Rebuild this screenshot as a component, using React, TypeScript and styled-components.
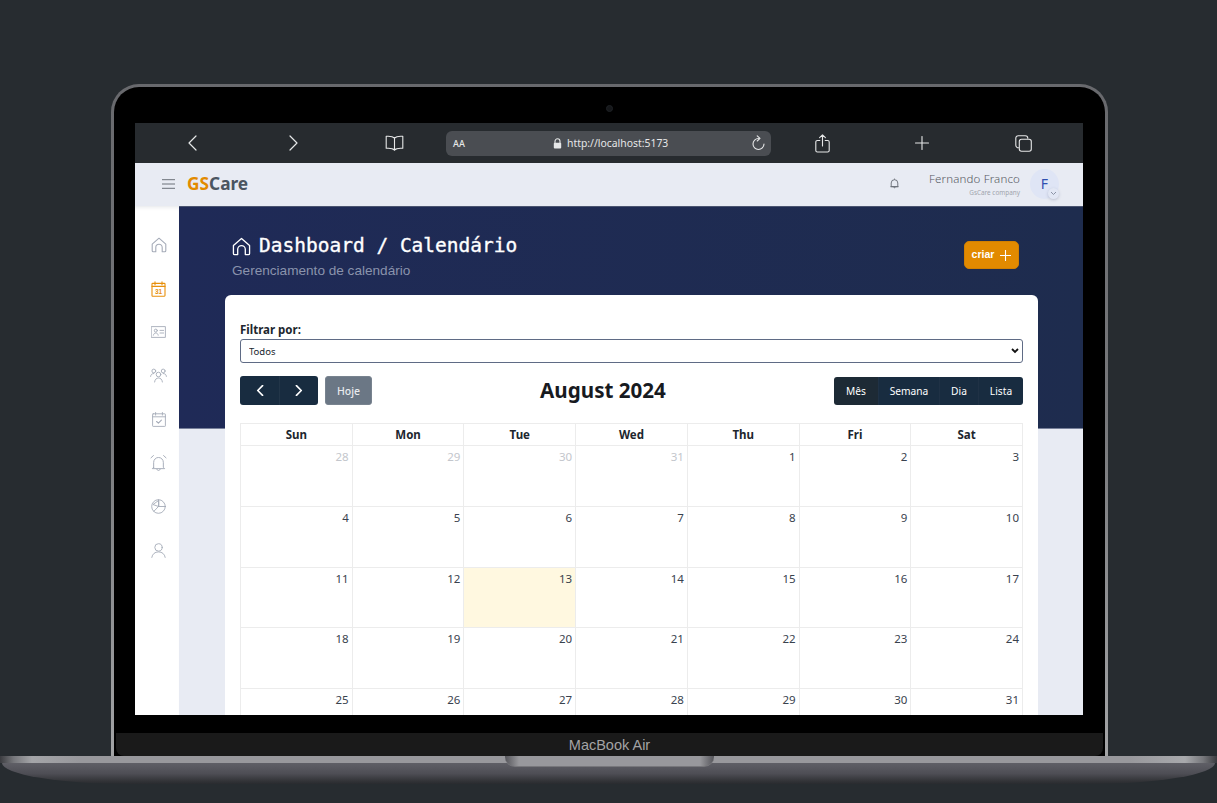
import React from 'react';
import styled, { createGlobalStyle } from 'styled-components';

const GlobalStyles = createGlobalStyle`
    html, body {
        margin: 0;
        padding: 0;
        background: #272c30;
    }
    * {
        box-sizing: border-box;
    }
`;

const UI_FONT = `"Noto Sans", "Open Sans", sans-serif`;

const Page = styled.div`
    width: 1217px;
    height: 803px;
    overflow: hidden;
    padding-top: 84px;
    background: #272c30;
    font-family: ${UI_FONT};
`;

const Lid = styled.div`
    width: 997px;
    height: 672px;
    margin-left: 111px;
    padding: 3px 3px 0;
    border-radius: 28px 28px 0 0;
    background: linear-gradient(180deg, #68696d 0%, #77787b 50%, #a3a4a6 100%);
`;
const LidInner = styled.div`
    height: 100%;
    display: flex;
    flex-direction: column;
    border-radius: 25px 25px 0 0;
    background: #000;
`;
const TopBezel = styled.div`
    height: 36px;
    flex: none;
    display: flex;
    align-items: center;
    justify-content: center;
    padding-top: 6px;
`;
const Camera = styled.div`
    width: 7px;
    height: 7px;
    border-radius: 50%;
    background: #15171a;
    border: 1px solid #1f2226;
`;
const Screen = styled.div`
    width: 948px;
    height: 592px;
    flex: none;
    margin-left: 21px;
    overflow: hidden;
    display: flex;
    flex-direction: column;
    background: #fff;
`;
const Chin = styled.div`
    height: 23px;
    flex: none;
    margin: 18px 2px 0;
    border-radius: 0 0 8px 8px;
    background: #1a1a1a;
    color: #a3a3a5;
    font-family: "Liberation Sans", Arial, sans-serif;
    font-size: 14.5px;
    line-height: 24px;
    text-align: center;
`;

const Base = styled.div`
    position: relative;
    height: 28px;
    width: 1217px;
`;
const BaseStrip = styled.div`
    height: 7px;
    background: linear-gradient(90deg, #3a3b3f 0, #77787c 14px, #a4a5a8 32px, #98989c 80px, #98989c 1130px, #a8a9ac 1185px, #77787c 1203px, #3a3b3f 1217px);
`;
const BaseBody = styled.div`
    height: 21px;
    margin: 0 2px;
    border-radius: 0 0 130px 130px / 0 0 21px 21px;
    background: linear-gradient(180deg, #5f5f66 0%, #4e4e55 50%, #333438 85%, #292b2f 100%);
`;
const BaseNotch = styled.div`
    position: absolute;
    top: 0;
    left: 505px;
    width: 209px;
    height: 11px;
    border-radius: 0 0 10px 10px;
    background: linear-gradient(90deg, #55555a 0, #98989c 14px, #98989c 195px, #55555a 100%);
    border-bottom: 1px solid #77777b;
`;

/* browser bar */
const BrowserBar = styled.div`
    height: 40px;
    flex: none;
    display: flex;
    align-items: center;
    padding-left: 8px;
    background: #272b2f;
    color: #e6e7e8;
`;
const BrowserIcon = styled.div<{ $wide?: boolean }>`
    width: ${(p) => (p.$wide ? 102 : 100)}px;
    display: flex;
    justify-content: center;
    align-items: center;
`;
const UrlBar = styled.div`
    width: 325px;
    height: 25px;
    margin: 0 1px;
    padding: 0 6px 0 7px;
    display: flex;
    align-items: center;
    border-radius: 6px;
    background: #4a4d52;
`;
const UrlAa = styled.span`
    width: 100px;
    font-size: 9px;
    font-weight: 500;
`;
const UrlText = styled.span`
    margin-left: 5px;
    font-size: 10.4px;
    flex: 1;
`;

/* app header */
const AppHeader = styled.div`
    height: 43px;
    flex: none;
    display: flex;
    align-items: center;
    padding: 0 24px 2px 27px;
    background: #e8ebf3;
`;
const Logo = styled.div`
    margin-left: 12px;
    font-size: 17.3px;
    font-weight: 700;
    color: #4b5560;
`;
const LogoAccent = styled.span`
    color: #e28a00;
`;
const HeaderRight = styled.div`
    margin-left: auto;
    display: flex;
    align-items: center;
`;
const UserBlock = styled.div`
    margin: 1px 10px 0 30px;
    display: flex;
    flex-direction: column;
    align-items: flex-end;
`;
const UserName = styled.div`
    font-size: 11.5px;
    line-height: 15px;
    letter-spacing: 0.15px;
    font-weight: 300;
    color: #55585f;
`;
const UserCompany = styled.div`
    margin-top: 1px;
    font-size: 6.4px;
    line-height: 11px;
    color: #a0a4ad;
`;
const Avatar = styled.div`
    position: relative;
    width: 29px;
    height: 30px;
    display: flex;
    align-items: center;
    justify-content: center;
    border-radius: 50%;
    background: #dfe5f5;
    color: #2f4fb0;
    font-size: 14px;
`;
const AvatarBadge = styled.div`
    position: absolute;
    right: 0;
    bottom: 0;
    width: 11px;
    height: 11px;
    display: flex;
    align-items: center;
    justify-content: center;
    border-radius: 50%;
    background: #e2e7f4;
    box-shadow: 0 1px 3px rgba(90, 100, 130, 0.3);
    color: #8b93a5;
`;

/* body */
const AppBody = styled.div`
    flex: 1;
    min-height: 0;
    display: flex;
`;
const Sidebar = styled.div`
    width: 44px;
    flex: none;
    padding-top: 17px;
    background: #fff;
    box-shadow: inset 0 4px 4px -3px rgba(60, 70, 90, 0.14);
    display: grid;
    grid-auto-rows: 43.7px;
    align-content: start;
`;
const SideItem = styled.div<{ $active?: boolean }>`
    display: flex;
    align-items: center;
    justify-content: center;
    padding-left: 3px;
    color: ${(p) => (p.$active ? '#e8900c' : '#a5abb8')};
`;
const Main = styled.div`
    flex: 1;
    min-width: 0;
    background: #e8ebf3;
`;
const Hero = styled.div`
    height: 223px;
    display: flex;
    justify-content: space-between;
    align-items: flex-start;
    padding: 27px 64px 0 53px;
    background: linear-gradient(90deg, #1f2a57 0%, #1e2c4e 100%);
    border-top: 1px solid #4a5470;
    border-bottom: 1px solid #77809a;
`;
const HeroTitleRow = styled.div`
    display: flex;
    align-items: center;
    gap: 8px;
    color: #fff;
`;
const HeroTitle = styled.h1`
    margin: 0;
    font-family: "DejaVu Sans Mono", "Liberation Mono", monospace;
    font-size: 19.5px;
    line-height: 24px;
    font-weight: 500;
    -webkit-text-stroke: 0.35px #fff;
    color: #fff;
`;
const HeroSubtitle = styled.div`
    margin-top: 4px;
    font-family: "Liberation Sans", Arial, sans-serif;
    font-size: 13.6px;
    line-height: 18px;
    color: #8a93ac;
`;
const CreateButton = styled.button`
    margin-top: 7px;
    width: 55px;
    height: 28px;
    display: flex;
    align-items: center;
    justify-content: center;
    gap: 6px;
    padding: 0;
    border: 1px solid #d28000;
    border-radius: 5px;
    background: #e28a00;
    color: #fff;
    font-family: "Liberation Sans", Arial, sans-serif;
    font-size: 10.5px;
    font-weight: 700;
`;
const CreateLabel = styled.span`
    margin-bottom: 3px;
`;

/* card */
const Card = styled.div`
    margin: -134px 45px 0 46px;
    padding: 26px 15px 0;
    position: relative;
    border-radius: 6px 6px 0 0;
    background: #fff;
`;
const FilterLabel = styled.label`
    display: block;
    font-size: 11.5px;
    line-height: 18px;
    font-weight: 700;
    color: #20262e;
`;
const SelectWrap = styled.div`
    position: relative;
    color: #111;
`;
const FilterSelect = styled.select`
    display: block;
    width: 100%;
    height: 24px;
    padding: 0 8px;
    appearance: none;
    border: 1px solid #5f6b85;
    border-radius: 3px;
    background: #fff;
    color: #20262e;
    font-family: ${UI_FONT};
    font-size: 9.5px;
`;
const SelectArrow = styled.svg`
    position: absolute;
    top: 9px;
    right: 4px;
    pointer-events: none;
`;
const Toolbar = styled.div`
    margin-top: 13px;
    height: 29px;
    display: flex;
    justify-content: space-between;
    align-items: center;
`;
const ToolbarGroup = styled.div`
    display: flex;
    align-items: center;
    gap: 7px;
`;
const ButtonGroup = styled.div`
    display: flex;
    border-radius: 3px;
    overflow: hidden;
`;
const NavButton = styled.button<{ $side: 'l' | 'r' }>`
    width: 39px;
    height: 29px;
    display: flex;
    align-items: center;
    justify-content: center;
    padding: ${(p) => (p.$side === 'l' ? '0 0 0 2px' : '0 2px 0 0')};
    border: none;
    background: #182c40;
    color: #fff;
    & + & {
        border-left: 1px solid #223548;
    }
`;
const TodayButton = styled.button`
    width: 47px;
    height: 29px;
    padding: 0;
    border: 1px solid #78838f;
    border-radius: 3px;
    background: #6b7785;
    color: #e8eaee;
    font-family: ${UI_FONT};
    font-size: 10.5px;
    font-weight: 500;
`;
const MonthTitle = styled.h2`
    margin: 0;
    font-size: 20.6px;
    line-height: 29px;
    font-weight: 700;
    color: #171a1f;
`;
const ViewButton = styled.button<{ $active?: boolean; $w: number }>`
    width: ${(p) => p.$w}px;
    height: 28px;
    padding: 0;
    border: none;
    border-left: 1px solid #1f3145;
    background: ${(p) => (p.$active ? '#1d2a35' : '#182c40')};
    color: #fff;
    font-family: ${UI_FONT};
    font-size: 10.2px;
    &:first-child {
        border-left: none;
    }
`;

/* calendar */
const CalendarGrid = styled.div`
    margin-top: 18.4px;
    display: grid;
    grid-template-columns: repeat(7, 1fr);
    grid-template-rows: 22px repeat(5, 60.7px);
    border-top: 1px solid #ececec;
    border-left: 1px solid #ececec;
`;
const DayHeader = styled.div`
    display: flex;
    align-items: center;
    justify-content: center;
    border-right: 1px solid #ececec;
    border-bottom: 1px solid #ececec;
    font-size: 11.5px;
    font-weight: 700;
    color: #20262e;
`;
const DayCell = styled.div<{ $today?: boolean; $muted?: boolean }>`
    padding: 2px 3px 0 0;
    text-align: right;
    border-right: 1px solid #ececec;
    border-bottom: 1px solid #ececec;
    background: ${(p) => (p.$today ? '#fff8e0' : '#fff')};
    color: ${(p) => (p.$muted ? '#c3c6cc' : '#39424e')};
    font-size: 11.5px;
    line-height: 18px;
`;

/* drawn icons */
const ICON = { fill: 'none', stroke: 'currentColor', strokeLinecap: 'round', strokeLinejoin: 'round' } as const;

const Chevron = ({ dir, size = 16, w = 1.2 }: { dir: 'l' | 'r'; size?: number; w?: number }) => (
    <svg width={size} height={size} viewBox="0 0 16 16" {...ICON} strokeWidth={w}>
        <path d={dir === 'l' ? 'M11 1 4 8l7 7' : 'M5 1l7 7-7 7'} />
    </svg>
);
const BookIcon = () => (
    <svg width="19" height="16" viewBox="0 0 19 16" {...ICON} strokeWidth="1.1">
        <path d="M9.5 3C8 1.5 5 1 1.2 1.3v12C5 13 8 13.4 9.5 15c1.5-1.6 4.5-2 8.3-1.7v-12C14 1 11 1.5 9.5 3z" />
        <path d="M9.5 3v12" />
    </svg>
);
const LockIcon = () => (
    <svg width="9" height="11" viewBox="0 0 9 11">
        <path d="M2 5V3.3a2.5 2.5 0 0 1 5 0V5" fill="none" stroke="currentColor" strokeWidth="1.1" />
        <rect x="0.8" y="4.8" width="7.4" height="5.6" rx="1" fill="currentColor" />
    </svg>
);
const ReloadIcon = () => (
    <svg width="13" height="16" viewBox="0 0 13 16" {...ICON} strokeWidth="1.1">
        <path d="M6.5 3.5a5.5 5.5 0 1 0 5.5 5.6" />
        <path d="M5.2 0.8 8 3.4 5.2 6" />
    </svg>
);
const ShareIcon = () => (
    <svg width="15" height="19" viewBox="0 0 15 19" {...ICON} strokeWidth="1.1">
        <path d="M4.8 6.5H2.4A1.6 1.6 0 0 0 .8 8.1v8.3A1.6 1.6 0 0 0 2.4 18h10.2a1.6 1.6 0 0 0 1.6-1.6V8.1a1.6 1.6 0 0 0-1.6-1.6h-2.4" />
        <path d="M7.5 12V1M4.6 3.6 7.5.8l2.9 2.8" />
    </svg>
);
const PlusIcon = ({ size = 14, w = 1.1 }: { size?: number; w?: number }) => (
    <svg width={size} height={size} viewBox="0 0 14 14" {...ICON} strokeWidth={w}>
        <path d="M7 .5v13M.5 7h13" />
    </svg>
);
const TabsIcon = () => (
    <svg width="17" height="17" viewBox="0 0 17 17" {...ICON} strokeWidth="1.1">
        <path d="M3.5 12.8A2.6 2.6 0 0 1 .8 10.3V3.2A2.5 2.5 0 0 1 3.3.7h7a2.6 2.6 0 0 1 2.5 2.6" />
        <rect x="4.3" y="4.2" width="12" height="12" rx="2.2" />
    </svg>
);
const MenuIcon = () => (
    <svg width="13" height="10" viewBox="0 0 13 10" fill="none" stroke="#6a7078" strokeWidth="1">
        <path d="M0 .7h13M0 5h13M0 9.3h13" />
    </svg>
);
const BellIcon = () => (
    <svg width="9" height="11" viewBox="0 0 9 11" fill="none" stroke="#666b74" strokeWidth="0.9" strokeLinejoin="round">
        <path d="M1.2 8.7V5a3.3 3.3 0 0 1 6.6 0v3.7H1.2zM.4 8.7h8.2M4.5 1.6V.6M3.6 9.2a1 1 0 0 0 1.8 0" />
    </svg>
);
const HomeIcon = ({ size = 16, w = 1.1 }: { size?: number; w?: number }) => (
    <svg width={size} height={size} viewBox="0 0 16 16" {...ICON} strokeWidth={w}>
        <path d="M1.2 7.2 8 1.2l6.8 6v6.6a1 1 0 0 1-1 1h-2.6V10.4a3.2 3.2 0 0 0-6.4 0v4.4H2.2a1 1 0 0 1-1-1V7.2z" />
    </svg>
);
const CalendarNumIcon = () => (
    <svg width="15" height="16" viewBox="0 0 15 16" {...ICON} strokeWidth="1.1">
        <rect x="1" y="2.4" width="13" height="12.8" rx="0.6" />
        <path d="M1 5.4h13M4 .8v3M11 .8v3" />
        <text x="7.5" y="12.8" textAnchor="middle" fontSize="6.5" fontWeight="700" fill="currentColor" stroke="none" fontFamily="Liberation Sans, sans-serif">31</text>
    </svg>
);
const IdIcon = () => (
    <svg width="15" height="12" viewBox="0 0 15 12" {...ICON} strokeWidth="0.9">
        <rect x="0.6" y="0.6" width="13.8" height="10.8" />
        <circle cx="4.8" cy="4.6" r="1.5" />
        <path d="M2.4 9.2c.3-1.5 1.2-2.2 2.4-2.2s2.1.7 2.4 2.2M9 4.4h3.6M9 7h3.6" />
    </svg>
);
const TeamIcon = () => (
    <svg width="17" height="15" viewBox="0 0 17 15" {...ICON} strokeWidth="0.9">
        <circle cx="8.5" cy="6.5" r="2.3" />
        <path d="M4.6 14c.3-2.7 1.9-4 3.9-4s3.6 1.3 3.9 4" />
        <circle cx="3.8" cy="3" r="1.9" />
        <circle cx="13.2" cy="3" r="1.9" />
        <path d="M.6 8.4c.2-1.8 1.3-2.9 3.2-2.9M16.4 8.4c-.2-1.8-1.3-2.9-3.2-2.9" />
    </svg>
);
const CalendarCheckIcon = () => (
    <svg width="14" height="15" viewBox="0 0 14 15" {...ICON} strokeWidth="0.9">
        <rect x="0.6" y="1.8" width="12.8" height="12.6" rx="0.6" />
        <path d="M.6 4.8h12.8M3.6.5v2.6M10.4.5v2.6" />
        <path d="m4.6 9.5 1.8 1.7 3-3" strokeWidth="1.1" />
    </svg>
);
const AlarmIcon = () => (
    <svg width="17" height="18" viewBox="0 0 15 16" {...ICON} strokeWidth="0.85">
        <path d="M3.2 11.8V7.4a4.3 4.3 0 0 1 8.6 0v4.4l1.2 1.2H2l1.2-1.2zM6 13.6a1.6 1.6 0 0 0 3 0" />
        <path d="M.8 3.4 3 1.4M14.2 3.4 12 1.4" />
    </svg>
);
const PieIcon = () => (
    <svg width="15" height="15" viewBox="0 0 15 15" {...ICON} strokeWidth="0.9">
        <circle cx="7.5" cy="7.5" r="6.8" />
        <path d="M7.5 7.5V.7M7.5 7.5h6.8M7.5 7.5l-4.700 4.900M7.500 1.600 2 5.500l5.500 2z" />
    </svg>
);
const PersonIcon = () => (
    <svg width="15" height="15" viewBox="0 0 15 15" {...ICON} strokeWidth="0.9">
        <circle cx="7.5" cy="4.4" r="3.7" />
        <path d="M.8 14.4c.6-3.5 3.1-5.5 6.7-5.5s6.1 2 6.7 5.5" />
    </svg>
);

const WEEK_DAYS = ['Sun', 'Mon', 'Tue', 'Wed', 'Thu', 'Fri', 'Sat'];
const PREVIOUS_MONTH = [28, 29, 30, 31];
const AUGUST = Array.from({ length: 31 }, (_, i) => i + 1);

const App: React.FC = () => {
    return (
        <Page>
            <GlobalStyles />
            <Lid>
                <LidInner>
                    <TopBezel>
                        <Camera />
                    </TopBezel>
                    <Screen>
                        <BrowserBar>
                            <BrowserIcon><Chevron dir="l" /></BrowserIcon>
                            <BrowserIcon><Chevron dir="r" /></BrowserIcon>
                            <BrowserIcon $wide><BookIcon /></BrowserIcon>
                            <UrlBar>
                                <UrlAa>AA</UrlAa>
                                <LockIcon />
                                <UrlText>http://localhost:5173</UrlText>
                                <ReloadIcon />
                            </UrlBar>
                            <BrowserIcon><ShareIcon /></BrowserIcon>
                            <BrowserIcon><PlusIcon /></BrowserIcon>
                            <BrowserIcon $wide><TabsIcon /></BrowserIcon>
                        </BrowserBar>
                        <AppHeader>
                            <MenuIcon />
                            <Logo><LogoAccent>GS</LogoAccent>Care</Logo>
                            <HeaderRight>
                                <BellIcon />
                                <UserBlock>
                                    <UserName>Fernando Franco</UserName>
                                    <UserCompany>GsCare company</UserCompany>
                                </UserBlock>
                                <Avatar>
                                    F
                                    <AvatarBadge>
                                        <svg width="7" height="5" viewBox="0 0 7 5" fill="none" stroke="currentColor" strokeWidth="1">
                                            <path d="m1 1 2.5 2.5L6 1" />
                                        </svg>
                                    </AvatarBadge>
                                </Avatar>
                            </HeaderRight>
                        </AppHeader>
                        <AppBody>
                            <Sidebar>
                                <SideItem><HomeIcon /></SideItem>
                                <SideItem $active><CalendarNumIcon /></SideItem>
                                <SideItem><IdIcon /></SideItem>
                                <SideItem><TeamIcon /></SideItem>
                                <SideItem><CalendarCheckIcon /></SideItem>
                                <SideItem><AlarmIcon /></SideItem>
                                <SideItem><PieIcon /></SideItem>
                                <SideItem><PersonIcon /></SideItem>
                            </Sidebar>
                            <Main>
                                <Hero>
                                    <div>
                                        <HeroTitleRow>
                                            <HomeIcon size={19} w={1.1} />
                                            <HeroTitle>Dashboard / Calendário</HeroTitle>
                                        </HeroTitleRow>
                                        <HeroSubtitle>Gerenciamento de calendário</HeroSubtitle>
                                    </div>
                                    <CreateButton>
                                        <CreateLabel>criar</CreateLabel>
                                        <PlusIcon size={11} w={1.4} />
                                    </CreateButton>
                                </Hero>
                                <Card>
                                    <FilterLabel htmlFor="filtro">Filtrar por:</FilterLabel>
                                    <SelectWrap>
                                        <FilterSelect id="filtro" defaultValue="Todos">
                                            <option>Todos</option>
                                        </FilterSelect>
                                        <SelectArrow width="8" height="6" viewBox="0 0 8 6" fill="none" stroke="currentColor" strokeWidth="1.8">
                                            <path d="m1 1 3 3 3-3" />
                                        </SelectArrow>
                                    </SelectWrap>
                                    <Toolbar>
                                        <ToolbarGroup>
                                            <ButtonGroup>
                                                <NavButton $side="l"><Chevron dir="l" size={11} w={2.4} /></NavButton>
                                                <NavButton $side="r"><Chevron dir="r" size={11} w={2.4} /></NavButton>
                                            </ButtonGroup>
                                            <TodayButton>Hoje</TodayButton>
                                        </ToolbarGroup>
                                        <MonthTitle>August 2024</MonthTitle>
                                        <ButtonGroup>
                                            <ViewButton $active $w={44}>Mês</ViewButton>
                                            <ViewButton $w={61}>Semana</ViewButton>
                                            <ViewButton $w={39}>Dia</ViewButton>
                                            <ViewButton $w={45}>Lista</ViewButton>
                                        </ButtonGroup>
                                    </Toolbar>
                                    <CalendarGrid>
                                        {WEEK_DAYS.map((day) => (
                                            <DayHeader key={day}>{day}</DayHeader>
                                        ))}
                                        {PREVIOUS_MONTH.map((day) => (
                                            <DayCell key={`prev-${day}`} $muted>{day}</DayCell>
                                        ))}
                                        {AUGUST.map((day) => (
                                            <DayCell key={day} $today={day === 13}>{day}</DayCell>
                                        ))}
                                    </CalendarGrid>
                                </Card>
                            </Main>
                        </AppBody>
                    </Screen>
                    <Chin>MacBook Air</Chin>
                </LidInner>
            </Lid>
            <Base>
                <BaseStrip />
                <BaseBody />
                <BaseNotch />
            </Base>
        </Page>
    );
};

export default App;
